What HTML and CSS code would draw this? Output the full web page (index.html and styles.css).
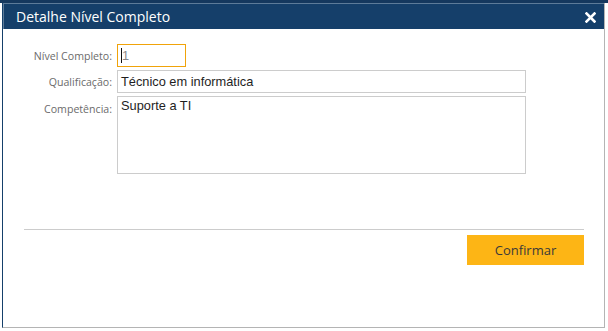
FILE: index.html
```html
<!DOCTYPE html>
<html lang="pt-BR">
<head>
    <meta charset="UTF-8">
    <title>Detalhe Nível Completo</title>
    <link rel="stylesheet" href="styles.css">
</head>
<body>
    <div class="page-top"></div>
    <div class="dialog">
        <div class="dialog-header">
            <span class="dialog-title">Detalhe Nível Completo</span>
            <svg class="dialog-close" width="11" height="11" viewBox="0 0 11 11">
                <path d="M1.5 1.5 L9.5 9.5 M9.5 1.5 L1.5 9.5" stroke="#ffffff" stroke-width="2.6" stroke-linecap="square"/>
            </svg>
        </div>
        <div class="dialog-body">
            <div class="form-row">
                <label class="form-label">Nível Completo:</label>
                <div class="field field-short field-focus"><span class="caret"></span>1</div>
            </div>
            <div class="form-row">
                <label class="form-label">Qualificação:</label>
                <div class="field">Técnico em informática</div>
            </div>
            <div class="form-row">
                <label class="form-label label-top">Competência:</label>
                <div class="field field-area">Suporte a TI</div>
            </div>
        </div>
        <div class="dialog-footer">
            <button class="btn-confirm">Confirmar</button>
        </div>
    </div>
</body>
</html>
```

FILE: styles.css
```css
body {
    margin: 0;
    background: #ffffff;
    font-family: "Open Sans", "Noto Sans", sans-serif;
}

.page-top {
    height: 3px;
    background: #15385e;
}

.dialog {
    margin-left: 2px;
    width: 601px;
    height: 324px;
    border-left: 1px solid #15406b;
    border-right: 1px solid #b4b4b4;
    border-bottom: 1px solid #b4b4b4;
    display: flex;
    flex-direction: column;
}

.dialog-header {
    height: 25px;
    background: #153f6a;
    border-top: 1px solid #5d7b99;
    border-left: 1px solid #5d7b99;
    display: flex;
    align-items: center;
    justify-content: space-between;
    padding: 0 8px 0 12px;
    color: #ffffff;
}

.dialog-title {
    font-size: 14px;
    letter-spacing: 0;
}

.dialog-close {
    display: block;
    margin-top: 1px;
}

.dialog-body {
    padding: 15px 0 0 0;
    display: flex;
    flex-direction: column;
    gap: 3px;
    height: 185px;
}

.form-row {
    display: flex;
    align-items: center;
}

.form-label {
    width: 109px;
    padding-right: 5px;
    text-align: right;
    font-size: 10.6px;
    color: #6b6b6b;
}

.label-top {
    align-self: flex-start;
    padding-top: 6px;
}

.field {
    width: 401px;
    height: 21px;
    border: 1px solid #cccccc;
    padding: 0 3px;
    font-family: "Liberation Sans", Arial, sans-serif;
    font-size: 12.8px;
    color: #1e1e1e;
    line-height: 21px;
}

.field-short {
    width: 61px;
    height: 21px;
    color: #888888;
}

.field-focus {
    border-color: #f0a30a;
}

.caret {
    display: inline-block;
    width: 1px;
    height: 15px;
    background: #111111;
    vertical-align: -3px;
}

.field-area {
    height: 76px;
    line-height: 17px;
}

.dialog-footer {
    margin: 0 20px 0 21px;
    border-top: 1px solid #cccccc;
    padding-top: 5px;
    display: flex;
    justify-content: flex-end;
}

.btn-confirm {
    width: 117px;
    height: 30px;
    border: none;
    background: #fdb515;
    color: #3a3a3a;
    font-family: "Open Sans", "Noto Sans", sans-serif;
    font-size: 13px;
    padding: 0;
}
```
